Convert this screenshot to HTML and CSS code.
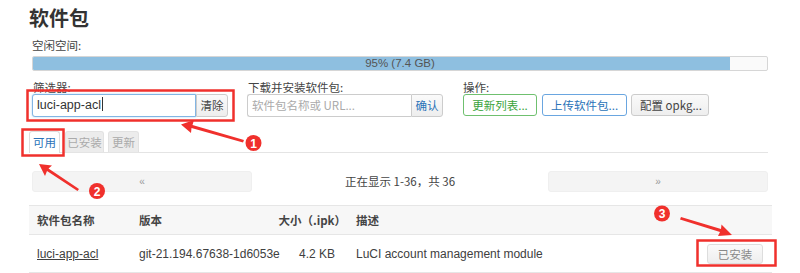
FILE: index.html
```html
<!DOCTYPE html>
<html lang="zh">
<head>
<meta charset="utf-8">
<link rel="stylesheet" href="styles.css">
</head>
<body>
<div class="page">
  <h2 class="title">软件包</h2>
  <div class="label">空闲空间:</div>
  <div class="progress">
    <div class="fill" style="width:95%"></div>
    <span class="ptext">95% (7.4 GB)</span>
  </div>

  <div class="controls">
    <div class="group g1">
      <div class="label">筛选器:</div>
      <div class="ctl">
        <div class="input focus">luci-app-acl<span class="caret"></span></div>
        <div class="btn addon">清除</div>
      </div>
    </div>
    <div class="group g2">
      <div class="label">下载并安装软件包:</div>
      <div class="ctl">
        <div class="input placeholder">软件包名称或 URL...</div>
        <div class="btn addon blue-text">确认</div>
      </div>
    </div>
    <div class="group g3">
      <div class="label">操作:</div>
      <div class="actions">
        <div class="btn act green">更新列表...</div>
        <div class="btn act blue">上传软件包...</div>
        <div class="btn act">配置 opkg...</div>
      </div>
    </div>
  </div>

  <div class="tabs">
    <div class="tab active">可用</div>
    <div class="tab w3">已安装</div>
    <div class="tab">更新</div>
  </div>

  <div class="pager">
    <div class="pbtn">«</div>
    <div class="pinfo">正在显示 1-36，共 36</div>
    <div class="pbtn">»</div>
  </div>

  <div class="table">
    <div class="row head">
      <div class="c name">软件包名称</div>
      <div class="c ver">版本</div>
      <div class="c size">大小（.ipk）</div>
      <div class="c desc">描述</div>
    </div>
    <div class="row">
      <div class="c name"><span class="link">luci-app-acl</span></div>
      <div class="c ver">git-21.194.67638-1d6053e</div>
      <div class="c size data">4.2 KB</div>
      <div class="c desc">LuCI account management module</div>
      <div class="c op"><div class="btn installed">已安装</div></div>
    </div>
  </div>
</div>

<svg class="marks" width="800" height="273" viewBox="0 0 800 273">
  <g fill="none" stroke="#f0302c" stroke-width="2.5">
    <rect x="27.5" y="90.5" width="206" height="30"/>
    <rect x="22.5" y="129.5" width="41" height="26"/>
    <rect x="697.5" y="240.5" width="78" height="25"/>
  </g>
  <g fill="#f0302c">
    <polygon points="181,124.5 194,120 192.5,125 244,140 243,142.5 191.5,128 191,133"/>
    <polygon points="39,164 52,165.5 48.5,168.5 79,189 77.5,191 47,171 45,176"/>
    <polygon points="732,235 718,236 720,232 680,219.5 681,217 721,229 721.5,224.5"/>
    <circle cx="253.5" cy="143" r="8"/>
    <circle cx="97" cy="191" r="8"/>
    <circle cx="662" cy="213.5" r="8"/>
  </g>
  <g fill="#fff" font-family="Liberation Sans, Arial, sans-serif" font-weight="bold" font-size="12" text-anchor="middle">
    <text x="253.5" y="147.5">1</text>
    <text x="97" y="195.5">2</text>
    <text x="662" y="218">3</text>
  </g>
</svg>
</body>
</html>
```
FILE: styles.css
```css
* { box-sizing: border-box; }
html, body { margin: 0; padding: 0; background: #fff; }
body {
  width: 800px;
  height: 273px;
  overflow: hidden;
  position: relative;
  font-family: "Liberation Sans", "Noto Sans CJK SC", Arial, sans-serif;
  font-size: 12px;
  color: #404040;
}
.page { padding: 0 32px 0 32px; }
.title {
  margin: 0 0 0 -3px;
  padding-top: 6px;
  height: 38px;
  font-size: 20px;
  line-height: 24px;
  font-weight: bold;
  color: #333;
  font-family: "Noto Sans CJK SC", sans-serif;
}
.label {
  font-family: "Noto Sans CJK SC", "Liberation Sans", sans-serif;
  font-size: 11.5px;
  line-height: 14px;
  height: 14px;
  color: #444;
}
.progress {
  margin-top: 4px;
  position: relative;
  height: 15px;
  border: 1px solid #d6d6d6;
  border-radius: 2px;
  background: #fafafa;
  overflow: hidden;
}
.fill { height: 100%; background: #8ebfe0; }
.ptext {
  position: absolute;
  left: 0; right: 0; top: 0;
  text-align: center;
  font-size: 11.5px;
  line-height: 13px;
  color: #555;
}
.controls { display: flex; margin-top: 9px; height: 40px; }
.group .label { margin-left: 1px; }
.g1 { width: 215px; }
.g2 { width: 215px; }
.ctl { display: flex; height: 23px; }
.input {
  height: 23px;
  width: 164px;
  border: 1px solid #ccc;
  border-right: none;
  border-radius: 3px 0 0 3px;
  padding: 0 4px;
  font-size: 12.5px;
  line-height: 21px;
  color: #333;
  background: #fff;
  white-space: nowrap;
}
.input.focus { border-color: #82b5e3; box-shadow: 0 0 2px rgba(102,175,233,0.6); border-right: 1px solid #82b5e3; }
.caret { display: inline-block; width: 1px; height: 14px; background: #333; vertical-align: -2px; margin-left: 1px; }
.placeholder { color: #aaa; font-family: "Noto Sans CJK SC", "Liberation Sans", sans-serif; font-size: 11.5px; }
.btn {
  font-family: "Noto Sans CJK SC", "Liberation Sans", sans-serif;
  font-size: 11.5px;
  border: 1px solid #ccc;
  border-radius: 3px;
  background: linear-gradient(#fafafa, #eeeeee);
  color: #444;
  text-align: center;
  white-space: nowrap;
}
.addon {
  width: 32px;
  height: 23px;
  line-height: 21px;
  border-radius: 0 3px 3px 0;
  padding: 0;
}
.blue-text { color: #2a73b8; }
.actions { display: flex; gap: 4px; margin-left: 1px; }
.act { height: 22px; line-height: 20px; padding: 0 8px; font-size: 11.5px; }
.act.green { color: #3aa33a; border-color: #6fc06f; background: #fff; width: 74px; margin-right: 1px; }
.act.blue { color: #2a73b8; border-color: #6aa6e0; background: #fff; width: 85px; }
.act:last-child { width: 78px; }
.tabs {
  display: flex;
  margin: 11px 0 0 -3px;
  gap: 4px;
  border-bottom: 1px solid #e4e4e4;
  height: 22px;
}
.tab {
  font-family: "Noto Sans CJK SC", sans-serif;
  font-size: 11.5px;
  width: 31px;
  height: 21px;
  line-height: 20px;
  padding: 0;
  text-align: center;
  background: #ececec;
  color: #aaa;
  border: 1px solid #e2e2e2;
  border-bottom: none;
  border-radius: 3px 3px 0 0;
}
.tab.w3 { width: 39px; }
.tab.active {
  background: #fff;
  color: #2a73b8;
  border-color: #ddd;
  height: 22px;
  margin-right: 1px;
}
.pager {
  display: flex;
  align-items: center;
  margin-top: 17px;
  height: 22px;
}
.pbtn {
  width: 220px;
  height: 21px;
  line-height: 20px;
  text-align: center;
  border-radius: 3px;
  background: #f4f4f4;
  border: 1px solid #efefef;
  color: #999;
  font-size: 10px;
}
.pinfo {
  flex: 1;
  text-align: center;
  font-family: "Noto Sans CJK SC", "Liberation Sans", sans-serif;
  font-size: 11.5px;
  color: #444;
}
.table { margin: 13px 0 0 -3px; width: 743px; border-top: 1px solid #e6e6e6; }
.row { display: flex; align-items: center; height: 38px; border-bottom: 1px solid #e6e6e6; font-size: 12px; white-space: nowrap; }
.row.head { height: 29px; background: #f7f7f7; font-weight: bold; font-family: "Noto Sans CJK SC", sans-serif; font-size: 11.5px; color: #444; }
.c { flex: none; }
.name { width: 110px; padding-left: 8px; }
.ver { width: 131px; }
.size { width: 76px; text-align: right; }
.size.data { padding-right: 11px; }
.desc { padding-left: 10px; width: 340px; }
.op { flex: 1; display: flex; justify-content: flex-end; padding-right: 9px; }
.link { text-decoration: underline; color: #404040; }
.installed { width: 56px; height: 20px; line-height: 18px; color: #888; background: linear-gradient(#fafafa, #eeeeee); border-color: #ddd; }
.marks { position: absolute; left: 0; top: 0; pointer-events: none; }
```
